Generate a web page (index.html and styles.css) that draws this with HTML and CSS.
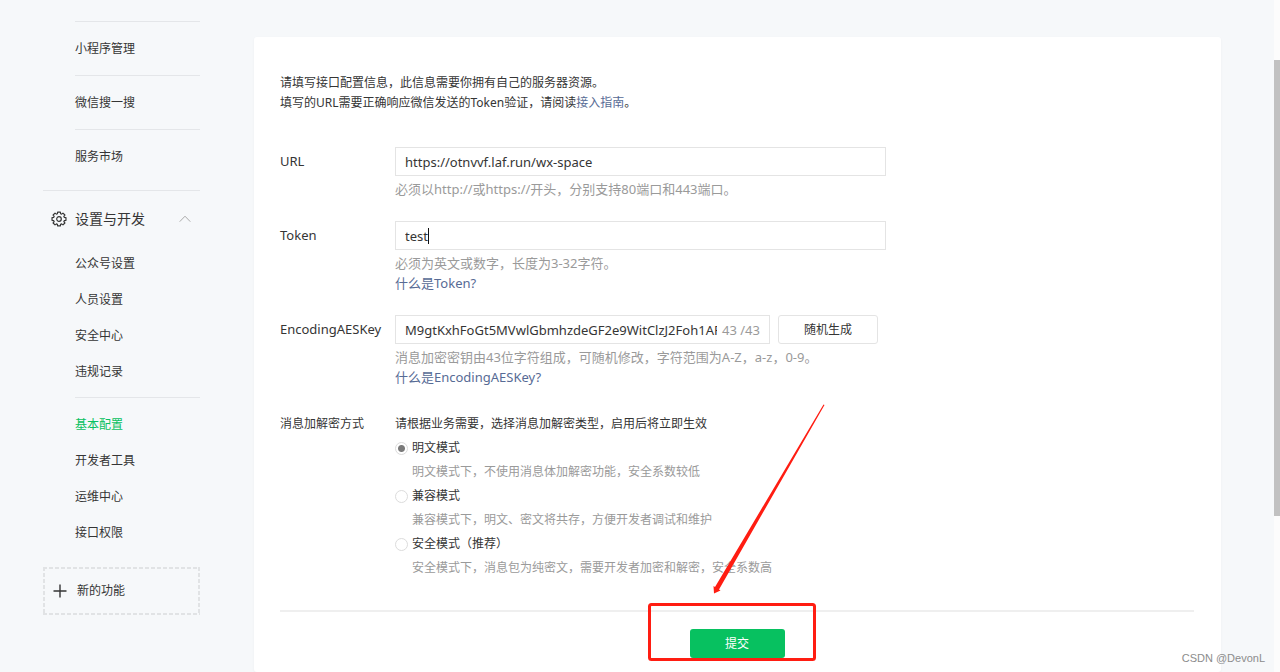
FILE: index.html
```html
<!DOCTYPE html>
<html lang="zh-CN">
<head>
<meta charset="utf-8">
<title>基本配置</title>
<link rel="stylesheet" href="styles.css">
</head>
<body>
<div class="page">
  <nav class="sidebar">
    <ul class="services">
      <li><a href="#">小程序管理</a></li>
      <li><a href="#">微信搜一搜</a></li>
      <li><a href="#">服务市场</a></li>
    </ul>
    <button class="group" type="button">
      <svg class="gear" viewBox="0 0 16 16" aria-hidden="true"><path d="M6.65 1.03H9.35L9.61 2.74 10.58 3.14 11.97 2.11 13.89 4.03 12.86 5.42 13.26 6.39 14.97 6.65V9.35L13.26 9.61 12.86 10.58 13.89 11.97 11.97 13.89 10.58 12.86 9.61 13.26 9.35 14.97H6.65L6.39 13.26 5.42 12.86 4.03 13.89 2.11 11.97 3.14 10.58 2.74 9.61 1.03 9.35V6.65L2.74 6.39 3.14 5.42 2.11 4.03 4.03 2.11 5.42 3.14 6.39 2.74Z"/><circle cx="8" cy="8" r="2.3"/></svg>
      <span>设置与开发</span>
      <svg class="chevron" viewBox="0 0 12 8" aria-hidden="true"><path d="M.7 6.7 6 1.2 11.3 6.7"/></svg>
    </button>
    <ul class="menu">
      <li><a href="#">公众号设置</a></li>
      <li><a href="#">人员设置</a></li>
      <li><a href="#">安全中心</a></li>
      <li><a href="#">违规记录</a></li>
    </ul>
    <ul class="menu menu-second">
      <li><a class="active" href="#">基本配置</a></li>
      <li><a href="#">开发者工具</a></li>
      <li><a href="#">运维中心</a></li>
      <li><a href="#">接口权限</a></li>
    </ul>
    <button class="new-feature" type="button">
      <svg class="plus" viewBox="0 0 14 14" aria-hidden="true"><path d="M7 .5V13.5M.5 7H13.5"/></svg>
      <span>新的功能</span>
    </button>
  </nav>

  <main class="card">
    <p class="intro">请填写接口配置信息，此信息需要你拥有自己的服务器资源。<br>填写的URL需要正确响应微信发送的Token验证，请阅读<a href="#">接入指南</a>。</p>
    <form class="form">
      <div class="row">
        <label class="label" for="url">URL</label>
        <div class="field">
          <div class="box"><input id="url" type="text" value="https://otnvvf.laf.run/wx-space"></div>
          <p class="hint">必须以http://或https://开头，分别支持80端口和443端口。</p>
        </div>
      </div>
      <div class="row">
        <label class="label" for="token">Token</label>
        <div class="field">
          <div class="box"><input id="token" type="text" value="test"><span class="caret"></span></div>
          <p class="hint">必须为英文或数字，长度为3-32字符。<br><a href="#">什么是Token?</a></p>
        </div>
      </div>
      <div class="row">
        <label class="label" for="aes">EncodingAESKey</label>
        <div class="field">
          <div class="key-line">
            <div class="box"><input id="aes" type="text" value="M9gtKxhFoGt5MVwlGbmhzdeGF2e9WitClzJ2Foh1AF"><span class="count">43 /43</span></div>
            <button class="random" type="button">随机生成</button>
          </div>
          <p class="hint">消息加密密钥由43位字符组成，可随机修改，字符范围为A-Z，a-z，0-9。<br><a href="#">什么是EncodingAESKey?</a></p>
        </div>
      </div>
      <div class="row" role="radiogroup" aria-labelledby="mode-label">
        <span class="label mode-label" id="mode-label">消息加解密方式</span>
        <div class="field modes">
          <p>请根据业务需要，选择消息加解密类型，启用后将立即生效</p>
          <div class="mode">
            <label><input type="radio" name="mode" checked>明文模式</label>
            <p class="desc">明文模式下，不使用消息体加解密功能，安全系数较低</p>
          </div>
          <div class="mode">
            <label><input type="radio" name="mode">兼容模式</label>
            <p class="desc">兼容模式下，明文、密文将共存，方便开发者调试和维护</p>
          </div>
          <div class="mode">
            <label><input type="radio" name="mode">安全模式（推荐）</label>
            <p class="desc">安全模式下，消息包为纯密文，需要开发者加密和解密，安全系数高</p>
          </div>
        </div>
      </div>
      <div class="footer">
        <div class="submit-wrap">
          <button class="submit" type="submit">提交</button>
          <svg class="mark" viewBox="0 0 180 260" aria-hidden="true">
            <rect x="2.5" y="202.5" width="165" height="55" rx="2"/>
            <path d="M176.5 2.5 177.5 3 72 187.5 73.500 188.500 67 191.500 66.500 184 68 185Z"/>
          </svg>
        </div>
      </div>
    </form>
  </main>

  <div class="track"><div class="thumb"></div></div>
  <div class="watermark">CSDN @DevonL</div>
</div>
</body>
</html>
```
FILE: styles.css
```css
* { box-sizing: border-box; }

body, p, ul { margin: 0; padding: 0; }
ul { list-style: none; }

body {
  font: 12px/20px "Noto Sans", "Noto Sans CJK SC", sans-serif;
  color: #353535;
  background: #f6f8fa;
}

button, input { font: inherit; color: inherit; }
a { color: #576b95; text-decoration: none; }

.page {
  position: relative;
  display: flex;
  height: 100vh;
  overflow: hidden;
}

.sidebar {
  flex: none;
  width: 200px;
  padding: 21px 0 0 43px;
}
.sidebar a { color: #353535; }
.sidebar a.active { color: #07c160; }

.services { margin-left: 32px; }
.services li {
  height: 54px;
  padding-top: 17px;
  border-top: 1px solid #e4e6e9;
}

.group {
  display: flex;
  align-items: center;
  width: 100%;
  height: 56px;
  margin-top: 7px;
  padding: 0 9px 0 8px;
  border: 0;
  border-top: 1px solid #e4e6e9;
  background: none;
  font-size: 14px;
}
.gear { width: 16px; height: 16px; margin-right: 8px; fill: none; stroke: #353535; stroke-width: 1.2; stroke-linejoin: round; }
.chevron { width: 12px; height: 8px; margin-left: auto; fill: none; stroke: #aaa; }

.menu {
  display: grid;
  gap: 16px;
  margin-left: 32px;
  padding-top: 8px;
}
.menu-second {
  margin-top: 15px;
  padding-top: 17px;
  border-top: 1px solid #e4e6e9;
}

.new-feature {
  --dash: #e1e3e5 0 4px, transparent 4px 6px;
  display: flex;
  align-items: center;
  gap: 10px;
  width: 100%;
  height: 48px;
  margin-top: 24px;
  padding: 0 10px;
  border: 0;
  background:
    repeating-linear-gradient(90deg, var(--dash)) top / 100% 2px no-repeat,
    repeating-linear-gradient(90deg, var(--dash)) bottom / 100% 2px no-repeat,
    repeating-linear-gradient(var(--dash)) left / 2px 100% no-repeat,
    repeating-linear-gradient(var(--dash)) right / 2px 100% no-repeat;
}
.plus { width: 14px; height: 14px; fill: none; stroke: #353535; stroke-width: 1.4; }

.card {
  flex: 1;
  margin: 37px 53px 0 54px;
  padding: 36px 27px 36px 26px;
  border-radius: 3px;
  background: #fff;
  box-shadow: 0 1px 3px rgba(0, 0, 0, .04);
}

.form { margin-top: 34px; }
.row { display: flex; margin-bottom: 22px; }
.label { flex: none; width: 115px; padding-top: 4px; font-size: 13px; }
.field { flex: 1; max-width: 491px; }

.box {
  position: relative;
  display: flex;
  flex: 1;
  align-items: center;
  height: 29px;
  padding: 0 9px;
  border: 1px solid #e4e4e4;
  font-size: 13px;
}
.box input {
  flex: 1;
  min-width: 0;
  padding: 0;
  border: 0;
  outline: 0;
  background: none;
}
.caret {
  position: absolute;
  left: 32px;
  top: 6px;
  width: 1px;
  height: 16px;
  background: #111;
}
.count { margin-left: 5px; color: #9a9a9a; }

.hint { margin-top: 3px; font-size: 13px; color: #9a9a9a; }

.key-line { display: flex; gap: 8px; padding-right: 8px; }
.random {
  width: 100px;
  padding: 0;
  border: 1px solid #e4e4e4;
  border-radius: 3px;
  background: #fff;
}

.mode-label { padding-top: 5px; font-size: 12px; }
.modes { padding-top: 5px; }
.mode { margin-top: 4px; }
.mode label { display: flex; align-items: center; gap: 4px; }
.mode input {
  appearance: none;
  width: 13px;
  height: 13px;
  margin: 0;
  border: 1px solid #dcdcdc;
  border-radius: 50%;
  background: #fff;
}
.mode input:checked { background: radial-gradient(circle, #7a7a7a 3px, #fff 4px); }
.desc { margin-top: 4px; padding-left: 17px; color: #9a9a9a; }

.footer {
  display: flex;
  justify-content: center;
  margin-top: 32px;
  padding-top: 17px;
  border-top: 2px solid #efefef;
}
.submit-wrap { position: relative; }
.submit {
  display: block;
  width: 95px;
  height: 29px;
  padding: 0;
  border: 0;
  border-radius: 3px;
  background: #07c160;
  color: #fff;
}
.mark {
  position: absolute;
  left: -43px;
  bottom: -4px;
  width: 180px;
  height: 260px;
  pointer-events: none;
}
.mark rect { fill: none; stroke: #ff1d12; stroke-width: 3; }
.mark path { fill: #ff1d12; }

.track { flex: none; width: 6px; padding-top: 60px; background: #fcfcfc; }
.thumb { height: 456px; background: #c1c1c1; }

.watermark {
  position: absolute;
  right: 15px;
  bottom: 4px;
  font: 11px/20px "Liberation Sans", Arial, sans-serif;
  color: #8c8c8c;
}
```
